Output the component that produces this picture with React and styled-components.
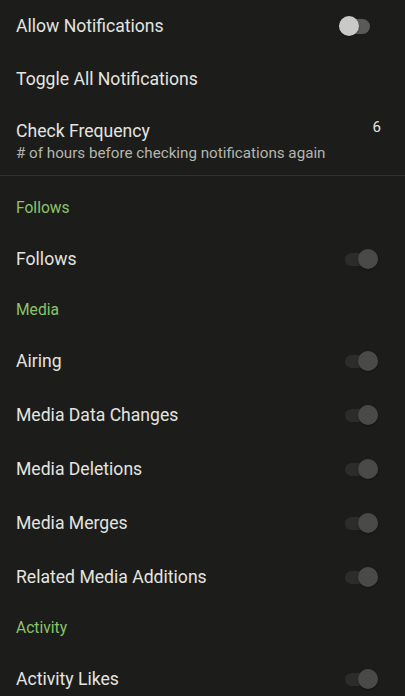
import React from "react";
import styled, { createGlobalStyle } from "styled-components";

const Global = createGlobalStyle`
  html, body { margin: 0; padding: 0; background: #1c1d1a; }
  body { font-family: Roboto, "Noto Sans", sans-serif; -webkit-font-smoothing: antialiased; }
`;

const Page = styled.div`
  width: 405px;
  height: 696px;
  overflow: hidden;
  background: #1c1d1a;
  display: flex;
  flex-direction: column;
  padding-top: 1px;
  box-sizing: border-box;
`;

const Row = styled.div`
  flex: none;
  height: ${(p) => p.$h || 54}px;
  display: flex;
  align-items: center;
  justify-content: space-between;
  padding: 0 ${(p) => p.$pr ?? 24}px 0 16px;
  box-sizing: border-box;
`;

const TextBlock = styled.div`
  display: flex;
  flex-direction: column;
  gap: 1px;
`;

const Title = styled.div`
  font-size: 17.6px;
  line-height: 22px;
  color: #e4e4e0;
`;

const Subtitle = styled.div`
  font-size: 15.2px;
  line-height: 20px;
  color: #b4b5b0;
`;

const Value = styled.div`
  font-size: 15px;
  color: #e4e4e0;
  align-self: flex-start;
  margin-top: 11px;
`;

const Divider = styled.div`
  flex: none;
  height: 1px;
  background: #2f312d;
  margin-bottom: 8px;
`;

const Header = styled.div`
  flex: none;
  height: 48px;
  display: flex;
  align-items: center;
  padding-left: 16px;
  font-size: 15.6px;
  color: #8cc26c;
`;

const Track = styled.div`
  position: relative;
  width: ${(p) => (p.$disabled ? 33 : 31)}px;
  height: ${(p) => (p.$disabled ? 13 : 15)}px;
  border-radius: 8px;
  background: ${(p) => (p.$disabled ? "#2c2d2a" : "#5a5a59")};
`;

const Thumb = styled.div`
  position: absolute;
  top: 50%;
  width: 20px;
  height: 20px;
  margin-top: -10px;
  border-radius: 50%;
  ${(p) => (p.$on ? "right: 0;" : "left: 0;")}
  background: ${(p) => (p.$disabled ? "#4a4a49" : "#c9c9c7")};
  box-shadow: 0 1px 2px rgba(0, 0, 0, 0.35);
`;

const Toggle = ({ on, disabled }) => (
  <Track $disabled={disabled}>
    <Thumb $on={on} $disabled={disabled} />
  </Track>
);

const sections = [
  { title: "Follows", items: ["Follows"] },
  {
    title: "Media",
    items: [
      "Airing",
      "Media Data Changes",
      "Media Deletions",
      "Media Merges",
      "Related Media Additions",
    ],
  },
  { title: "Activity", items: ["Activity Likes"] },
];

export default function App() {
  return (
    <Page>
      <Global />
      <Row $h={50} $pr={35}>
        <Title>Allow Notifications</Title>
        <Toggle on={false} />
      </Row>
      <Row $h={56}>
        <Title>Toggle All Notifications</Title>
      </Row>
      <Row $h={68}>
        <TextBlock>
          <Title>Check Frequency</Title>
          <Subtitle># of hours before checking notifications again</Subtitle>
        </TextBlock>
        <Value>6</Value>
      </Row>
      <Divider />
      {sections.map((s) => (
        <React.Fragment key={s.title}>
          <Header>{s.title}</Header>
          {s.items.map((it) => (
            <Row key={it} $pr={27}>
              <Title>{it}</Title>
              <Toggle on disabled />
            </Row>
          ))}
        </React.Fragment>
      ))}
    </Page>
  );
}
